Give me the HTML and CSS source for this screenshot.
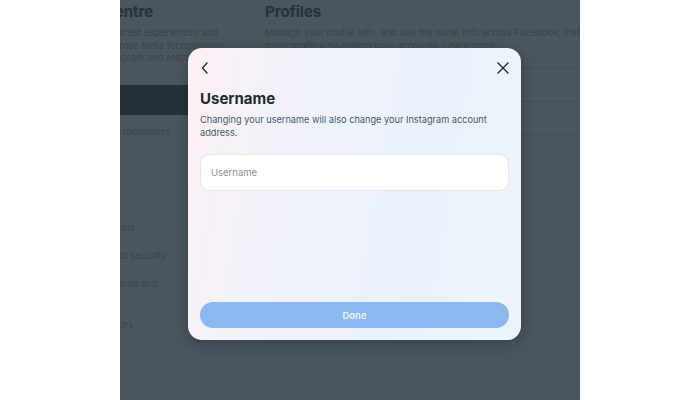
FILE: index.html
```html
<!DOCTYPE html>
<html>
<head>
  <meta charset="UTF-8">
  <meta name="viewport" content="width=device-width, initial-scale=1.0">
  <title>Accounts Centre - Username</title>
  <link rel="stylesheet" href="styles.css">
</head>
<body>
  <div class="screen">
    <!-- dimmed page behind the dialog -->
    <div class="page">
      <aside class="sidebar">
        <h1 class="side-title">Accounts Centre</h1>
        <p class="side-desc">Manage your connected experiences and account settings across Meta technologies like Facebook, Instagram and Meta Horizon.</p>
        <div class="nav-item active">Profiles</div>
        <div class="nav-item">Connected experiences</div>
        <div class="nav-gap"></div>
        <div class="nav-item">Personal details</div>
        <div class="nav-item">Password and security</div>
        <div class="nav-item">Your information and permissions</div>
        <div class="nav-item">Ad preferences</div>
      </aside>
      <main class="main">
        <h2 class="main-title">Profiles</h2>
        <p class="main-desc">Manage your profile info, and use the same info across Facebook, Instagram and Meta Horizon. Add more profiles by adding your accounts. Learn more</p>
        <div class="profile-list">
          <div class="profile-row"></div>
          <div class="profile-row"></div>
        </div>
      </main>
    </div>

    <div class="modal">
      <div class="modal-head">
        <button class="icon-btn" aria-label="Back">
          <svg width="8" height="12" viewBox="0 0 8 12"><path d="M6 1 L1.5 6 L6 11" fill="none" stroke="#1c2b33" stroke-width="1.4" stroke-linecap="round" stroke-linejoin="round"/></svg>
        </button>
        <button class="icon-btn close" aria-label="Close">
          <svg width="12" height="12" viewBox="0 0 12 12"><path d="M1 1 L11 11 M11 1 L1 11" fill="none" stroke="#1c2b33" stroke-width="1.4" stroke-linecap="round"/></svg>
        </button>
      </div>
      <h3 class="modal-title">Username</h3>
      <p class="modal-desc">Changing your username will also change your Instagram account address.</p>
      <input class="field" type="text" placeholder="Username">
      <div class="spacer"></div>
      <button class="done-btn">Done</button>
    </div>
  </div>
</body>
</html>
```

FILE: styles.css
```css
:root {
  --shade: #4a555d; --shade-text: #3b454c; --shade-head: #27323a;
  --ink: #1c2b33; --ink-muted: #465a69; --blue-off: #8cb8ef;
}
html { box-sizing: border-box; }
*, *:before, *:after { box-sizing: inherit; }
body {
  margin: 0; background: #ffffff;
  font-family: Inter, "Open Sans", Arial, sans-serif;
}
.screen {
  position: relative; width: 460px; height: 400px; margin-left: 120px;
  background: var(--shade); overflow: hidden;
}

/* dimmed page */
.page { display: flex; margin-left: -90px; }
.sidebar { width: 208px; flex-shrink: 0; padding-top: 3px; }
.side-title { margin: 0; font-size: 15px; font-weight: 700; color: var(--shade-head); line-height: 18px; }
.side-desc { margin: 6px 0 0 2px; width: 206px; font-size: 9.5px; line-height: 12.5px; color: var(--shade-text); }
.nav-item { padding-left: 34px; font-size: 9.5px; line-height: 13px; margin-bottom: 15px; color: var(--shade-text); width: 150px; }
.nav-item.active { margin-top: 20px; height: 30px; margin-bottom: 10px; width: 208px; background: #25313a; }
.nav-gap { height: 68px; }
.main { padding-top: 3px; padding-left: 27px; width: 520px; flex-shrink: 0; }
.main-title { margin: 0; font-size: 15px; font-weight: 700; color: var(--shade-head); line-height: 18px; }
.main-desc { margin: 6px 0 0; width: 470px; font-size: 9.5px; line-height: 12.5px; color: var(--shade-text); }
.profile-list { margin-top: 16px; border-top: 1px solid #434d55; }
.profile-row { height: 33px; border-bottom: 1px solid #434d55; }

/* dialog */
.modal {
  position: absolute; left: 68px; top: 48px; width: 333px; height: 292px;
  display: flex; flex-direction: column; padding: 8px 12px 12px;
  border-radius: 14px;
  background: linear-gradient(100deg, #fcf0f4 0%, #f1f2fa 28%, #ebf2fc 65%, #edf4fa 100%);
  box-shadow: 0 4px 14px rgba(20, 30, 38, 0.35);
}
.modal-head { display: flex; justify-content: space-between; align-items: center; height: 24px; }
.icon-btn { border: 0; background: none; padding: 0 0 0 1px; width: 14px; height: 16px; display: inline-flex; align-items: center; justify-content: flex-start; cursor: pointer; }
.icon-btn.close { justify-content: flex-end; padding: 0; }
.modal-title { margin: 10px 0 0; font-size: 15px; font-weight: 700; color: var(--ink); line-height: 18px; }
.modal-desc { margin: 6px 0 0; font-size: 9.2px; line-height: 12.5px; color: var(--ink-muted); }
.field {
  margin-top: 15px; width: 100%; height: 37px; padding: 0 10px;
  border: 1px solid #e3e8ee; border-radius: 10px; background: #ffffff;
  font-family: inherit; font-size: 9.5px; color: var(--ink); outline: none;
}
.field::placeholder { color: #8a8f94; }
.spacer { flex: 1; }
.done-btn {
  height: 26px; width: 100%; border: 0; border-radius: 13px;
  background: var(--blue-off); color: #eef4fc;
  font-family: inherit; font-size: 9.5px; font-weight: 600; cursor: pointer;
}
```
